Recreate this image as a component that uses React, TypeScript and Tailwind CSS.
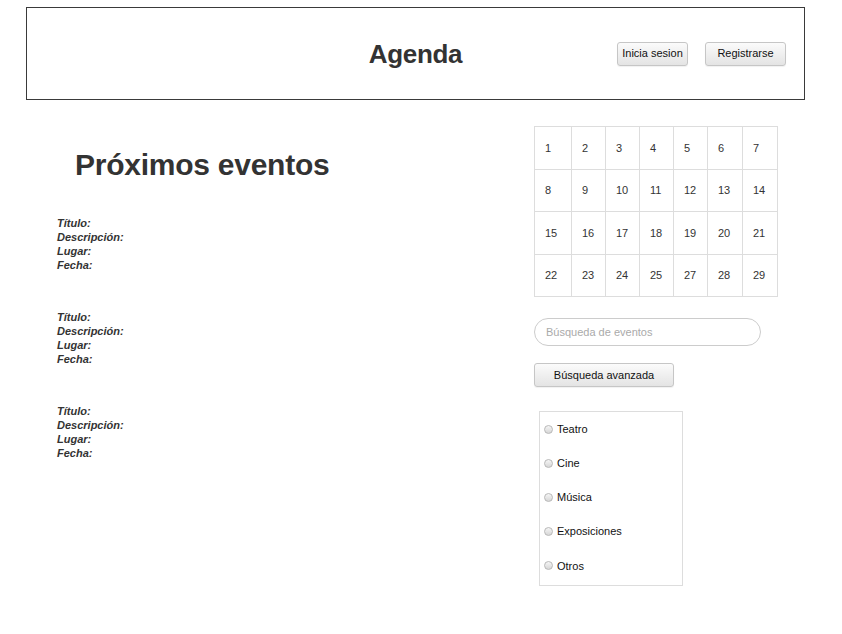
const days = [
  [1, 2, 3, 4, 5, 6, 7],
  [8, 9, 10, 11, 12, 13, 14],
  [15, 16, 17, 18, 19, 20, 21],
  [22, 23, 24, 25, 27, 28, 29]
]

const rowHeights = ['h-[43px]', 'h-[42px]', 'h-[43px]', 'h-[42px]']

const categories = ['Teatro', 'Cine', 'Música', 'Exposiciones', 'Otros']

const btn =
  'flex items-center justify-center h-[24px] rounded-[3px] border border-[#c6c6c6] bg-linear-to-b from-[#fbfbfb] to-[#e4e4e4] text-[11px] text-[#111] shadow-[0_1px_1px_rgba(0,0,0,0.06)]'

function EventItem() {
  return (
    <div className="flex flex-col text-[11px] leading-[14px] font-bold italic text-[#333]">
      <div>Título:</div>
      <div>Descripción:</div>
      <div>Lugar:</div>
      <div>Fecha:</div>
    </div>
  )
}

export default function App() {
  return (
    <div className="min-h-screen bg-white pt-[7px] font-['Liberation_Sans',Arial,sans-serif] text-[#333]">
      {/* cabecera */}
      <header className="ml-[26px] w-[779px] h-[93px] border border-[#3a3a3a] grid grid-cols-[1fr_auto_1fr] items-center">
        <div />
        <h1 className="text-[26px] leading-none font-bold text-[#333] tracking-[-0.3px]">Agenda</h1>
        <div className="flex justify-end gap-[17px] pr-[18px]">
          <button className={`${btn} w-[71px]`}>Inicia sesion</button>
          <button className={`${btn} w-[81px]`}>Registrarse</button>
        </div>
      </header>

      <div className="flex mt-[26px]">
        {/* eventos */}
        <div className="w-[534px] shrink-0 pl-[57px]">
          <h2 className="mt-[22px] ml-[18px] text-[30px] leading-[34px] font-bold text-[#333] tracking-[-0.25px]">
            Próximos eventos
          </h2>
          <div className="mt-[33px] flex flex-col gap-[38px] pt-px">
            <EventItem />
            <EventItem />
            <EventItem />
          </div>
        </div>

        {/* lateral */}
        <div className="flex flex-col items-start">
          <div className="grid grid-cols-[37px_34px_34px_34px_34px_35px_35px] border-l border-t border-[#dddddd]">
            {days.map((row, r) =>
              row.map((d) => (
                <div
                  key={d}
                  className={`${rowHeights[r]} flex items-center pl-[10px] border-r border-b border-[#dddddd] text-[11px] text-[#333]`}
                >
                  {d}
                </div>
              ))
            )}
          </div>

          <input
            type="text"
            placeholder="Búsqueda de eventos"
            className="mt-[21px] w-[227px] h-[28px] rounded-full border border-[#cccccc] pl-[11px] text-[11px] outline-none placeholder:text-[#aaaaaa]"
          />

          <button className={`${btn} mt-[17px] w-[140px]`}>Búsqueda avanzada</button>

          <div className="mt-[24px] ml-[5px] w-[144px] border border-[#dddddd] pb-[2px]">
            {categories.map((c) => (
              <label key={c} className="flex items-center h-[34.2px] pl-[4px] text-[11px] text-[#111]">
                <input
                  type="radio"
                  name="categoria"
                  className="appearance-none w-[9px] h-[9px] rounded-full border border-[#b8b8b8] bg-linear-to-b from-[#f6f6f6] to-[#d6d6d6]"
                />
                <span className="ml-[4px]">{c}</span>
              </label>
            ))}
          </div>
        </div>
      </div>
    </div>
  )
}
